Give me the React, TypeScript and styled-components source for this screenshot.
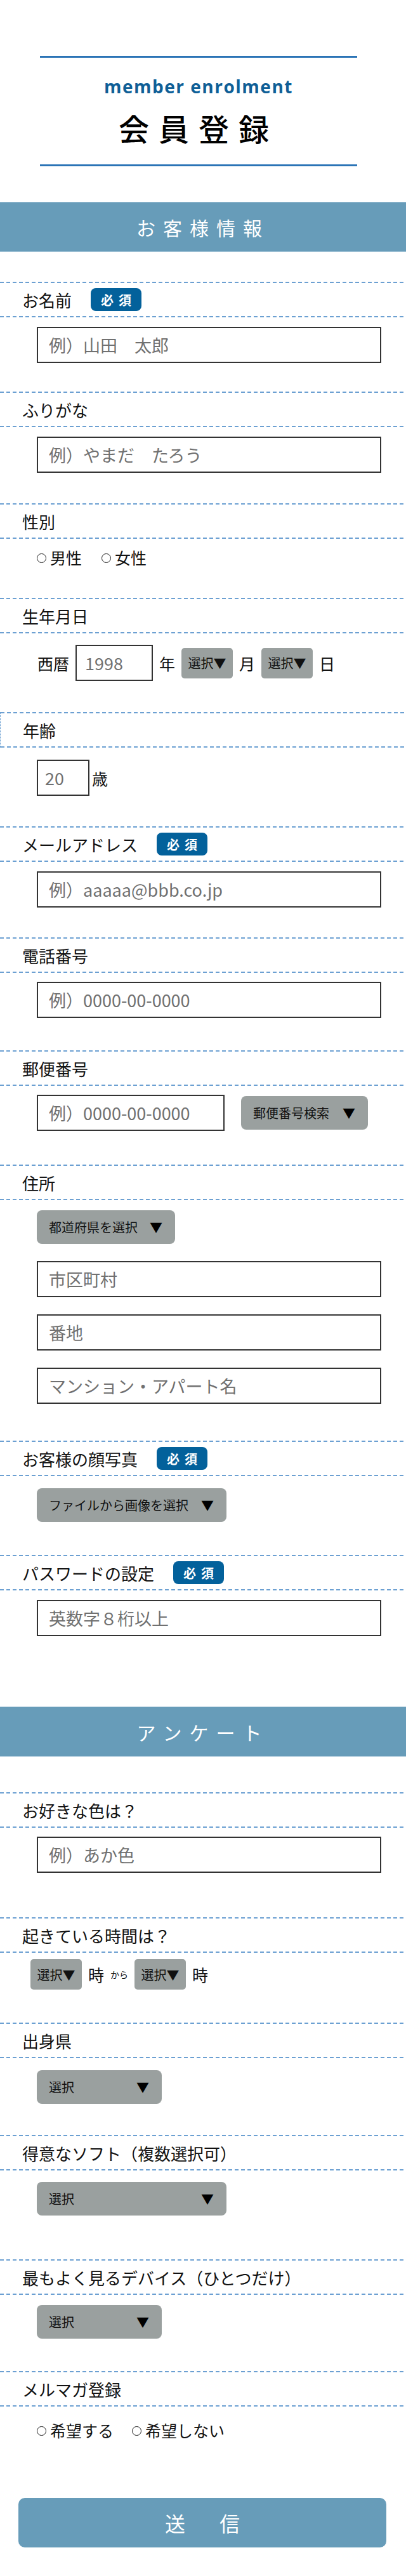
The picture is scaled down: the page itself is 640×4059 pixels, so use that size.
import React from "react";
import styled, { createGlobalStyle } from "styled-components";

const GlobalStyle = createGlobalStyle`
  body {
    margin: 0;
    background: #fff;
    color: #111;
    font-family: "Noto Sans CJK JP", "Noto Sans", sans-serif;
  }
  * {
    box-sizing: border-box;
  }
`;

const jp = `"Noto Sans CJK JP", "Noto Sans", sans-serif`;
const dash = (c: string) =>
  `repeating-linear-gradient(to right, ${c} 0 6px, transparent 6px 10px)`;

const Page = styled.div`
  width: 640px;
  padding: 88px 0 48px;
`;

const TitleBlock = styled.header`
  width: 500px;
  margin-left: 63px;
  padding: 31px 0 34px;
  border-top: 3px solid #2b74b6;
  border-bottom: 3px solid #2b74b6;
  text-align: center;
`;

const SubTitle = styled.div`
  font-family: "Open Sans", "Liberation Sans", sans-serif;
  font-weight: 700;
  font-size: 28px;
  line-height: 28px;
  letter-spacing: 1.5px;
  color: #0f5f97;
`;

const Title = styled.h1`
  margin: 27px 0 0;
  font-family: ${jp};
  font-weight: 500;
  font-size: 48px;
  line-height: 48px;
  letter-spacing: 15px;
  color: #000;
`;

const Band = styled.h2<{ $mt: number }>`
  margin: ${p => p.$mt}px 0 0;
  height: 79px;
  display: flex;
  align-items: center;
  justify-content: center;
  background: #679cb9;
  border-top: 1px solid #a4c4d8;
  border-bottom: 1px solid #a4c4d8;
  font-family: ${jp};
  font-weight: 400;
  font-size: 30px;
  letter-spacing: 12px;
  color: #fff;
`;

const Form = styled.div<{ $mt: number }>`
  margin-top: ${p => p.$mt}px;
`;

const LabelRow = styled.div<{ $side?: boolean }>`
  height: 56px;
  display: flex;
  align-items: center;
  gap: 30px;
  padding-left: 35px;
  font-size: 26px;
  color: #111;
  background-image: ${dash("#6ca0d2")}, ${dash("#6ca0d2")};
  background-size: 100% 2px;
  background-position: 0 0, 0 100%;
  background-repeat: no-repeat;
  border-left: ${p => (p.$side ? "1px dashed #6ca0d2" : "none")};
`;

const Badge = styled.span`
  width: 80px;
  height: 36px;
  display: flex;
  align-items: center;
  justify-content: center;
  padding-left: 8px;
  border-radius: 8px;
  background: #03619b;
  color: #fff;
  font-size: 20px;
  font-weight: 700;
  letter-spacing: 8px;
`;

const Body = styled.div<{ $pt: number; $pb: number; $pl?: number }>`
  padding: ${p => p.$pt}px 0 ${p => p.$pb}px ${p => p.$pl ?? 58}px;
`;

const Stack = styled.div`
  display: flex;
  flex-direction: column;
  align-items: flex-start;
  gap: 27px;
`;

const TextInput = styled.input<{ $w?: number; $pl?: number }>`
  display: block;
  width: ${p => p.$w ?? 543}px;
  height: 57px;
  margin: 0;
  padding: 0 0 0 ${p => p.$pl ?? 17}px;
  border: 2px solid #333;
  border-radius: 0;
  background: #fff;
  font-family: ${jp};
  font-size: 27px;
  color: #333;
  outline: none;
  &::placeholder {
    color: #707070;
  }
`;

const Row = styled.div<{ $gap: number; $ml?: number }>`
  display: flex;
  align-items: center;
  gap: ${p => p.$gap}px;
  margin-left: ${p => p.$ml ?? 0}px;
  font-size: 25px;
`;

const Small = styled.span`
  font-size: 14px;
`;

const MiniSelect = styled.div`
  width: 81px;
  height: 48px;
  display: flex;
  align-items: center;
  justify-content: center;
  border-radius: 5px;
  background: #9aa09f;
  font-size: 20px;
  color: #111;
`;

const Picker = styled.div<{ $w: number }>`
  width: ${p => p.$w}px;
  height: 53px;
  display: flex;
  align-items: center;
  justify-content: space-between;
  padding: 0 20px 0 19px;
  border-radius: 8px;
  background: #9aa09f;
  font-size: 20px;
  color: #111;
`;

const Arrow = styled.span`
  font-size: 20px;
  color: #000;
`;

const RadioGroup = styled.div<{ $gap: number }>`
  display: flex;
  gap: ${p => p.$gap}px;
  font-size: 25px;
  line-height: 39px;
`;

const RadioItem = styled.label`
  display: flex;
  align-items: center;
`;

const Circle = styled.span`
  width: 15px;
  height: 15px;
  margin: 2px 6px 0 0;
  border: 1.5px solid #222;
  border-radius: 50%;
`;

const Submit = styled.button`
  display: flex;
  align-items: center;
  justify-content: center;
  width: 580px;
  height: 78px;
  margin: 0 0 0 29px;
  padding: 0 0 0 11px;
  border: none;
  border-radius: 10px;
  background: #679cb9;
  color: #fff;
  font-family: ${jp};
  font-size: 32px;
  letter-spacing: 11px;
`;

interface FieldProps {
  label: string;
  required?: boolean;
  side?: boolean;
  pt: number;
  pb: number;
  pl?: number;
  children: React.ReactNode;
}

function Field({ label, required, side, pt, pb, pl, children }: FieldProps) {
  return (
    <section>
      <LabelRow $side={side}>
        <span>{label}</span>
        {required && <Badge>必須</Badge>}
      </LabelRow>
      <Body $pt={pt} $pb={pb} $pl={pl}>
        {children}
      </Body>
    </section>
  );
}

function Radios({ items, gap }: { items: string[]; gap: number }) {
  return (
    <RadioGroup $gap={gap}>
      {items.map(t => (
        <RadioItem key={t}>
          <Circle />
          {t}
        </RadioItem>
      ))}
    </RadioGroup>
  );
}

function WidePicker({ text, w }: { text: string; w: number }) {
  return (
    <Picker $w={w}>
      <span>{text}</span>
      <Arrow>▼</Arrow>
    </Picker>
  );
}

export default function App() {
  return (
    <Page>
      <GlobalStyle />
      <TitleBlock>
        <SubTitle>member enrolment</SubTitle>
        <Title>会員登録</Title>
      </TitleBlock>

      <Band $mt={56}>お客様情報</Band>
      <Form $mt={47}>
        <Field label="お名前" required pt={15} pb={45}>
          <TextInput placeholder="例）山田　太郎" />
        </Field>
        <Field label="ふりがな" pt={15} pb={48}>
          <TextInput placeholder="例）やまだ　たろう" />
        </Field>
        <Field label="性別" pt={10} pb={44}>
          <Radios items={["男性", "女性"]} gap={31} />
        </Field>
        <Field label="生年月日" pt={18} pb={49} pl={59}>
          <Row $gap={10}>
            <span>西暦</span>
            <TextInput $w={122} $pl={13} placeholder="1998" />
            <span>年</span>
            <MiniSelect>選択▼</MiniSelect>
            <span>月</span>
            <MiniSelect>選択▼</MiniSelect>
            <span>日</span>
          </Row>
        </Field>
        <Field label="年齢" side pt={19} pb={48}>
          <Row $gap={4}>
            <TextInput $w={83} $pl={11} placeholder="20" />
            <span>歳</span>
          </Row>
        </Field>
        <Field label="メールアドレス" required pt={15} pb={47}>
          <TextInput placeholder="例）aaaaa@bbb.co.jp" />
        </Field>
        <Field label="電話番号" pt={14} pb={51}>
          <TextInput placeholder="例）0000-00-0000" />
        </Field>
        <Field label="郵便番号" pt={14} pb={53}>
          <Row $gap={26}>
            <TextInput $w={296} placeholder="例）0000-00-0000" />
            <WidePicker text="郵便番号検索" w={200} />
          </Row>
        </Field>
        <Field label="住所" pt={16} pb={58}>
          <Stack>
            <WidePicker text="都道府県を選択" w={218} />
            <TextInput placeholder="市区町村" />
            <TextInput placeholder="番地" />
            <TextInput placeholder="マンション・アパート名" />
          </Stack>
        </Field>
        <Field label="お客様の顔写真" required pt={19} pb={52}>
          <WidePicker text="ファイルから画像を選択" w={299} />
        </Field>
        <Field label="パスワードの設定" required pt={15} pb={111}>
          <TextInput placeholder="英数字８桁以上" />
        </Field>
      </Form>

      <Band $mt={0}>アンケート</Band>
      <Form $mt={56}>
        <Field label="お好きな色は？" pt={14} pb={70}>
          <TextInput placeholder="例）あか色" />
        </Field>
        <Field label="起きている時間は？" pt={10} pb={52}>
          <Row $gap={10} $ml={-10}>
            <MiniSelect>選択▼</MiniSelect>
            <span>時</span>
            <Small>から</Small>
            <MiniSelect>選択▼</MiniSelect>
            <span>時</span>
          </Row>
        </Field>
        <Field label="出身県" pt={19} pb={49}>
          <WidePicker text="選択" w={197} />
        </Field>
        <Field label="得意なソフト（複数選択可）" pt={18} pb={69}>
          <WidePicker text="選択" w={299} />
        </Field>
        <Field label="最もよく見るデバイス（ひとつだけ）" pt={16} pb={51}>
          <WidePicker text="選択" w={197} />
        </Field>
        <Field label="メルマガ登録" pt={18} pb={87}>
          <Radios items={["希望する", "希望しない"]} gap={29} />
        </Field>
      </Form>

      <Submit type="button">送　信</Submit>
    </Page>
  );
}
